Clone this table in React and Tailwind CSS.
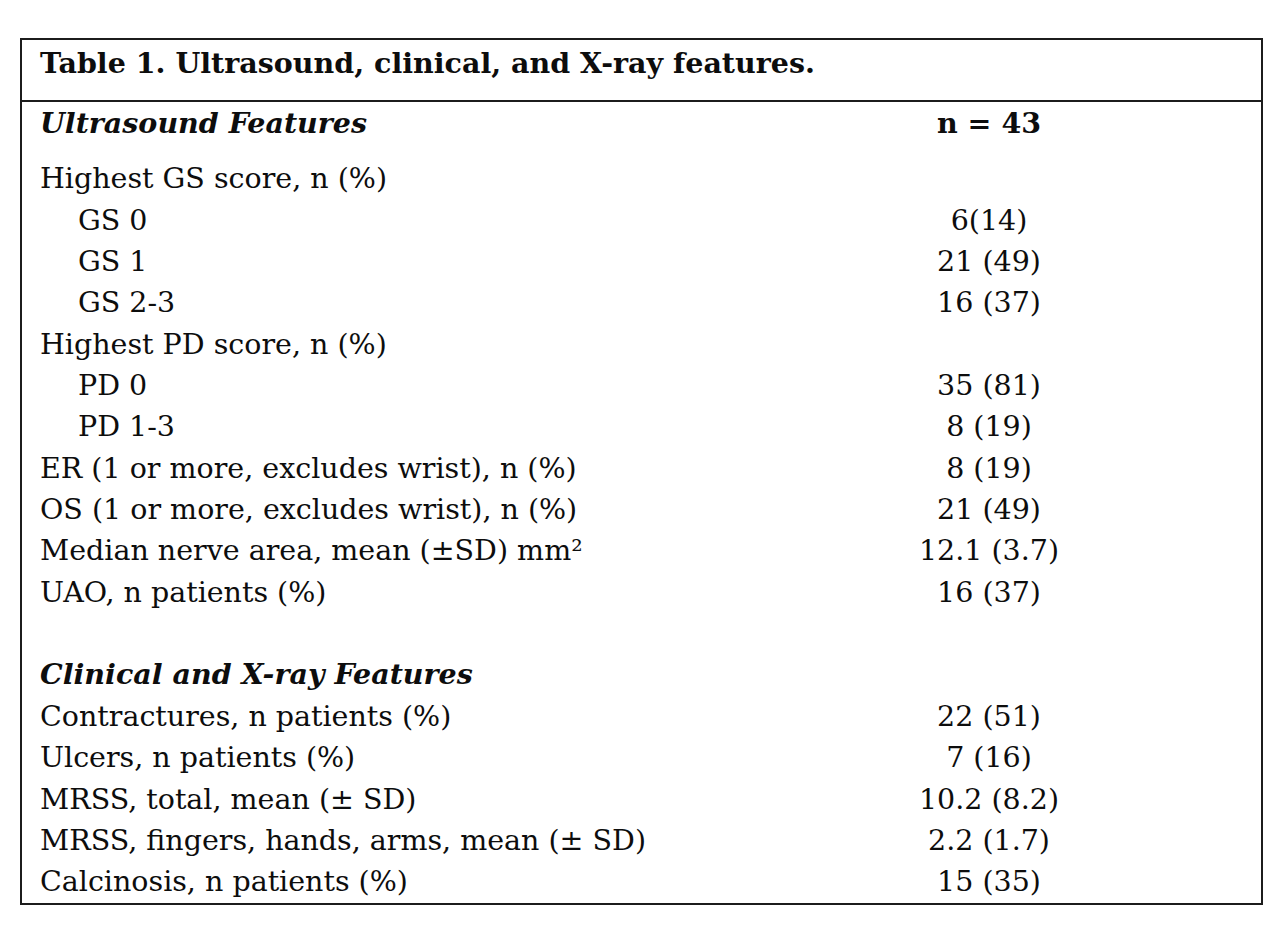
export default function App() {
  const rows = [
    { label: 'Highest GS score, n (%)', value: '' },
    { label: 'GS 0', value: '6(14)', indent: true },
    { label: 'GS 1', value: '21 (49)', indent: true },
    { label: 'GS 2-3', value: '16 (37)', indent: true },
    { label: 'Highest PD score, n (%)', value: '' },
    { label: 'PD 0', value: '35 (81)', indent: true },
    { label: 'PD 1-3', value: '8 (19)', indent: true },
    { label: 'ER (1 or more, excludes wrist), n (%)', value: '8 (19)' },
    { label: 'OS (1 or more, excludes wrist), n (%)', value: '21 (49)' },
    { label: 'Median nerve area, mean (±SD) mm²', value: '12.1 (3.7)' },
    { label: 'UAO, n patients (%)', value: '16 (37)' },
    { label: '', value: '' },
    { label: 'Clinical and X-ray Features', value: '', heading: true },
    { label: 'Contractures, n patients (%)', value: '22 (51)' },
    { label: 'Ulcers, n patients (%)', value: '7 (16)' },
    { label: 'MRSS, total, mean (± SD)', value: '10.2 (8.2)' },
    { label: 'MRSS, fingers, hands, arms, mean (± SD)', value: '2.2 (1.7)' },
    { label: 'Calcinosis, n patients (%)', value: '15 (35)' },
  ];

  return (
    <div className="min-h-[949px] bg-white pt-[38px] pl-[20px] text-[#0d0d0d] font-['DejaVu_Serif',serif]">
      <div className="w-[1243px] border-2 border-[#1c1c1c]">
        <div className="h-[62px] border-b-2 border-[#1c1c1c] pl-[18px] pt-[3px] text-[28.5px] font-bold leading-[41px] whitespace-nowrap">
          Table 1. Ultrasound, clinical, and X-ray features.
        </div>
        <div className="grid grid-cols-[695px_1fr] pt-[1px] pb-[14px] text-[28.5px] leading-[41.35px]">
          <div className="pl-[18px] font-bold italic">Ultrasound Features</div>
          <div className="text-center font-bold">n = 43</div>
        </div>
        {rows.map((r, i) => (
          <div key={i} className="grid h-[41.35px] grid-cols-[695px_1fr] text-[28.5px] leading-[41.35px]">
            <div className={`${r.indent ? 'pl-[56px]' : 'pl-[18px]'} ${r.heading ? 'font-bold italic' : ''} whitespace-nowrap`}>
              {r.label}
            </div>
            <div className="text-center">{r.value}</div>
          </div>
        ))}
      </div>
    </div>
  );
}
